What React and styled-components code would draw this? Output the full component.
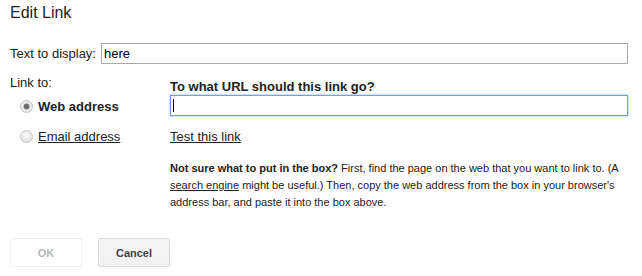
import React from 'react';
import styled, { createGlobalStyle } from 'styled-components';

const GlobalStyle = createGlobalStyle`
  html, body {
    margin: 0;
    padding: 0;
    background: #fff;
  }
  body {
    font-family: "Liberation Sans", Arial, sans-serif;
    font-size: 13px;
    color: #222;
  }
`;

const Dialog = styled.div`
  width: 642px;
  height: 276px;
  box-sizing: border-box;
  padding: 3px 14px 0 10px;
`;

const Title = styled.div`
  font-size: 16px;
  line-height: 20px;
  color: #222;
  margin-bottom: 20px;
`;

const TextRow = styled.div`
  display: flex;
  align-items: center;
  gap: 5px;
  height: 21px;
`;

const Label = styled.span`
  white-space: nowrap;
`;

const TextInput = styled.input`
  flex: ${p => (p.$grow ? '1' : 'none')};
  width: ${p => (p.$grow ? 'auto' : '100%')};
  box-sizing: border-box;
  height: 21px;
  border: 1px solid ${p => (p.$focused ? '#6f9ff0' : '#a9a9a9')};
  box-shadow: ${p => (p.$focused ? '0 0 2px 0 rgba(77,144,254,0.8)' : 'none')};
  padding: 0 2px;
  font: inherit;
  font-size: 13px;
  color: #000;
  outline: none;
`;

const Field = styled.div`
  position: relative;
  margin-top: 1px;
`;

const Caret = styled.span`
  position: absolute;
  left: 3px;
  top: 4px;
  width: 1px;
  height: 13px;
  background: #000;
`;

const Body = styled.div`
  display: grid;
  grid-template-columns: 160px 1fr;
  margin-top: 11px;
`;

const LeftCol = styled.div`
  display: flex;
  flex-direction: column;
`;

const LinkTo = styled.div`
  line-height: 15px;
  margin-bottom: 9px;
`;

const RadioRow = styled.div`
  display: flex;
  align-items: center;
  gap: 5px;
  padding-left: 10px;
  height: 15px;
  margin-bottom: ${p => p.$gap || 0}px;
`;

const Radio = styled.span`
  width: 11px;
  height: 11px;
  border-radius: 50%;
  border: 1px solid #c4c4c4;
  background: ${p =>
    p.$checked
      ? 'radial-gradient(circle, #6a6a6a 0 2.2px, #a9a9a9 2.8px, #e8e8e8 3.6px, #f7f7f7 100%)'
      : 'radial-gradient(circle at 50% 35%, #fafafa, #dcdcdc)'};
  flex-shrink: 0;
`;

const RadioText = styled.span`
  font-size: 13px;
  font-weight: ${p => (p.$bold ? 700 : 400)};
  text-decoration: ${p => (p.$link ? 'underline' : 'none')};
  color: #222;
`;

const RightCol = styled.div`
  display: flex;
  flex-direction: column;
`;

const Heading = styled.div`
  font-weight: 700;
  font-size: 13px;
  line-height: 15px;
  margin-top: 4px;
`;

const TestLink = styled.a`
  color: #222;
  text-decoration: underline;
  margin-top: 13px;
  line-height: 15px;
  align-self: flex-start;
`;

const Help = styled.p`
  margin: 16px 0 0;
  font-size: 11px;
  line-height: 17px;
  color: #222;
`;

const Strong = styled.b`
  font-weight: 700;
`;

const Under = styled.span`
  text-decoration: underline;
`;

const Buttons = styled.div`
  display: flex;
  gap: 16px;
  margin-top: 27px;
`;

const Button = styled.button`
  width: 72px;
  height: 29px;
  box-sizing: border-box;
  font-family: "Liberation Sans", Arial, sans-serif;
  font-size: 11px;
  font-weight: 700;
  border-radius: 2px;
  border: 1px solid ${p => (p.$disabled ? '#efefef' : 'rgba(0,0,0,0.1)')};
  background: ${p => (p.$disabled ? '#fff' : 'linear-gradient(#f5f5f5, #f1f1f1)')};
  color: ${p => (p.$disabled ? '#b8b8b8' : '#444')};
  padding: 0;
`;

export default function App() {
  return (
    <>
      <GlobalStyle />
      <Dialog>
        <Title>Edit Link</Title>
        <TextRow>
          <Label>Text to display:</Label>
          <TextInput $grow defaultValue="here" />
        </TextRow>
        <Body>
          <LeftCol>
            <LinkTo>Link to:</LinkTo>
            <RadioRow $gap={15}>
              <Radio $checked />
              <RadioText $bold>Web address</RadioText>
            </RadioRow>
            <RadioRow>
              <Radio />
              <RadioText $link>Email address</RadioText>
            </RadioRow>
          </LeftCol>
          <RightCol>
            <Heading>To what URL should this link go?</Heading>
            <Field>
              <TextInput $focused defaultValue="" />
              <Caret />
            </Field>
            <TestLink>Test this link</TestLink>
            <Help>
              <Strong>Not sure what to put in the box?</Strong> First, find the page on the web that you want to link to. (A{' '}
              <Under>search engine</Under> might be useful.) Then, copy the web address from the box in your browser's address bar, and paste it into the box above.
            </Help>
          </RightCol>
        </Body>
        <Buttons>
          <Button $disabled>OK</Button>
          <Button>Cancel</Button>
        </Buttons>
      </Dialog>
    </>
  );
}
